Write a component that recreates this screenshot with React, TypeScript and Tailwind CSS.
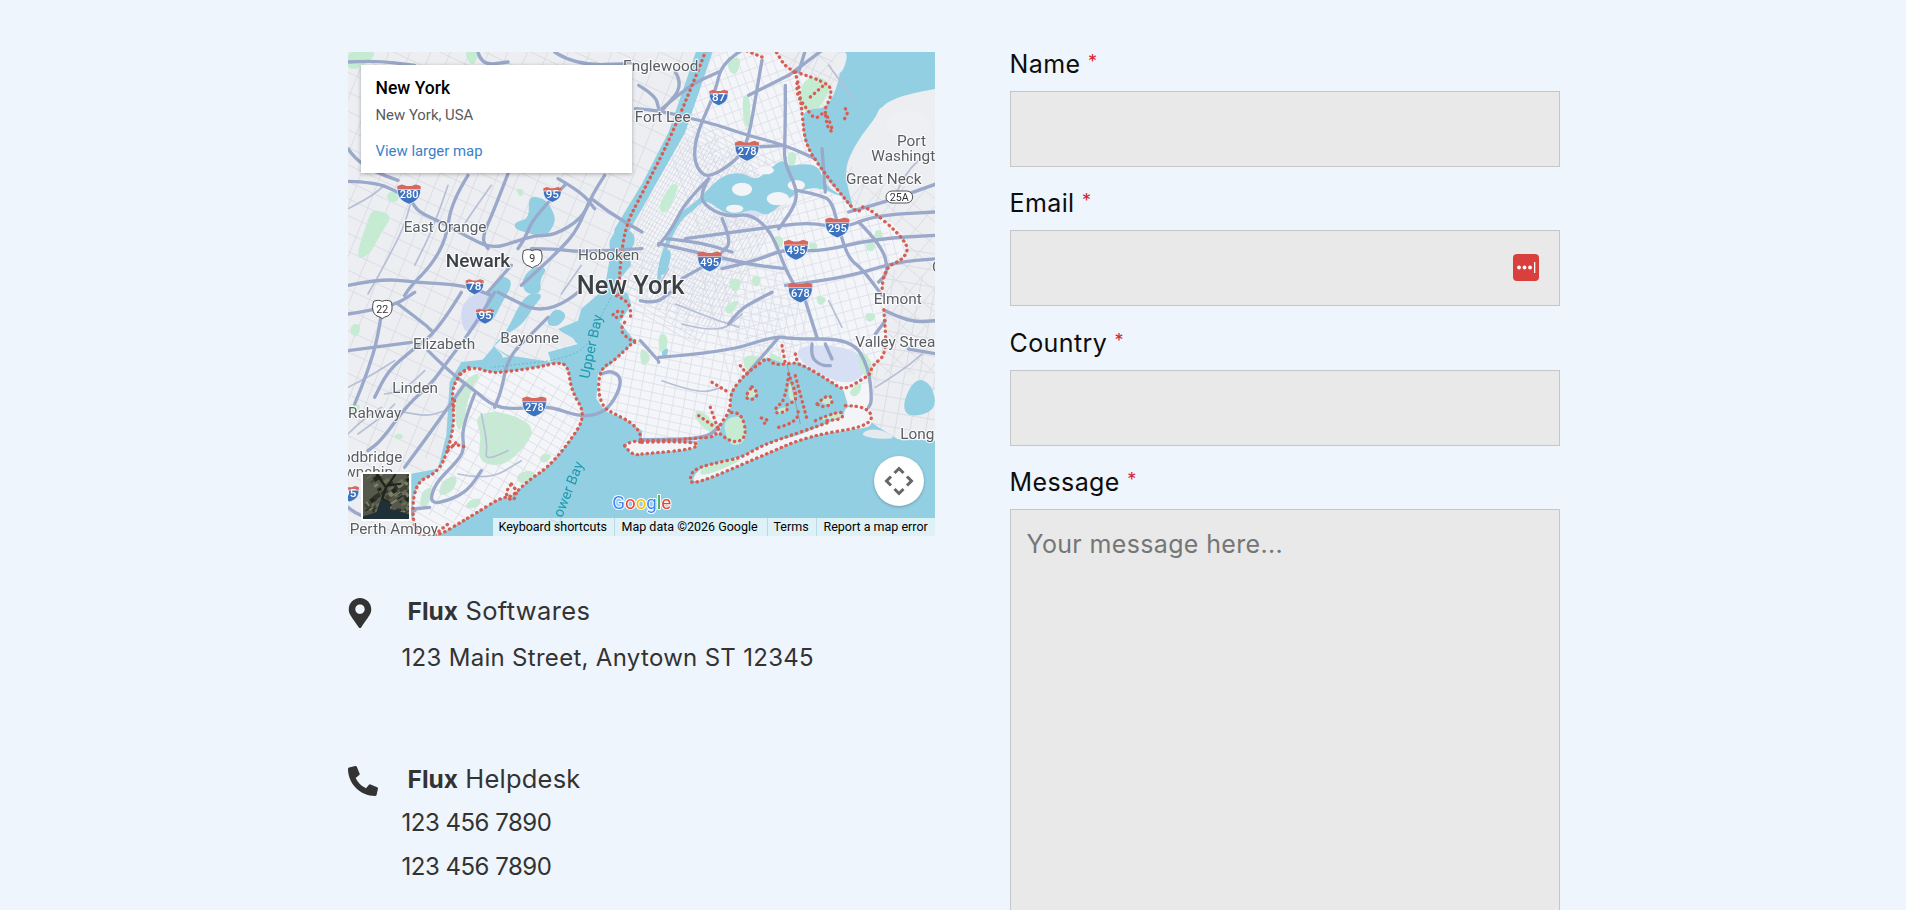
import { FaMapMarkerAlt, FaPhoneAlt } from "react-icons/fa";

type Off = [number, number];
const A: Off = [0, 0];
const B: Off = [882, 0];
const C: Off = [0, 726];
const D: Off = [882, 726];

const pts = (o: Off, s: string) =>
  s.trim().split(/\s+/).map((p) => {
    const [x, y] = p.split(",").map(Number);
    return [x + o[0], y + o[1]] as [number, number];
  });

// smooth line through points (midpoint quadratics)
const sm = (o: Off, s: string) => {
  const a = pts(o, s);
  if (a.length < 3) return `M${a[0]} L${a[1]}`;
  let d = `M${a[0][0]} ${a[0][1]}`;
  for (let i = 1; i < a.length - 1; i++) {
    const mx = (a[i][0] + a[i + 1][0]) / 2;
    const my = (a[i][1] + a[i + 1][1]) / 2;
    d += ` Q${a[i][0]} ${a[i][1]} ${mx} ${my}`;
  }
  const l = a[a.length - 1];
  return d + ` L${l[0]} ${l[1]}`;
};

const poly = (o: Off, s: string) => {
  const a = pts(o, s);
  let d = "";
  const n = a.length;
  for (let i = 0; i < n; i++) {
    const p = a[i];
    const q = a[(i + 1) % n];
    const mx = (p[0] + q[0]) / 2;
    const my = (p[1] + q[1]) / 2;
    d += i === 0 ? `M${mx} ${my}` : ` Q${p[0]} ${p[1]} ${mx} ${my}`;
  }
  const p = a[0];
  const q = a[1];
  return d + ` Q${p[0]} ${p[1]} ${(p[0] + q[0]) / 2} ${(p[1] + q[1]) / 2}Z`;
};

// street grid, wobbling slightly so it does not look ruled
const grid = (cx: number, cy: number, r: number, deg: number, step: number, seed = 1) => {
  const t = (deg * Math.PI) / 180;
  const ux = Math.cos(t), uy = Math.sin(t);
  const vx = -uy, vy = ux;
  let d = "";
  for (let k = -r, i = 0; k <= r; k += step, i++) {
    const j = Math.sin(i * 12.9 + seed) * step * 0.35;
    const s = -r + Math.abs(Math.sin(i * 7.3 + seed)) * r * 0.25;
    const e = r - Math.abs(Math.sin(i * 3.7 + seed)) * r * 0.25;
    d += `M${(cx + vx * (k + j) + ux * s).toFixed(0)} ${(cy + vy * (k + j) + uy * s).toFixed(0)}L${(cx + vx * (k + j) + ux * e).toFixed(0)} ${(cy + vy * (k + j) + uy * e).toFixed(0)}`;
  }
  return d;
};

const NYC =
  "1130,0 1192,0 1242,15 1282,0 1312,45 1342,55 1442,90 1372,170 1362,250 1402,320 1482,420 1522,490 1532,450 1672,540 1682,600 1602,650 1609,760 1617,906 1572,936 1567,966 1577,1130 1047,1300 745,1110 745,1000 830,726 850,640 882,470 1012,240 1097,0";
const SI =
  "335,966 370,941 430,964 500,956 570,946 630,931 660,941 670,1016 715,1091 660,1176 600,1246 540,1286 490,1336 460,1336 380,1386 330,1416 270,1452 195,1452 195,1296 270,1261 300,1196 320,1106 310,1016";
const OCEAN =
  "265,1460 1770,1460 1770,1166 1650,1162 1590,1125 1500,1060 1487,1016 1452,991 1352,931 1312,936 1257,916 1192,966 1147,1021 1147,1076 1122,1116 1112,1146 1047,1166 882,1166 882,1136 830,1101 770,1076 745,1040 750,966 790,936 860,866 815,810 850,760 840,726 800,700 850,640 830,560 882,470 1012,240 1097,-10 1047,-10 962,240 882,395 800,530 785,620 770,710 700,770 690,806 630,831 690,876 600,901 610,930 480,910 430,880 480,915 340,930 305,990 295,1150 270,1250 190,1265 190,1400";
const SOUND =
  "1482,-80 2000,-80 2000,90 1602,150 1582,200 1532,260 1492,340 1497,400 1522,490 1482,430 1432,380 1402,320 1372,280 1362,210 1372,170 1442,170 1482,60";
const EAST =
  "1072,420 1122,370 1182,360 1222,385 1257,360 1302,320 1322,345 1357,335 1412,340 1432,400 1472,425 1482,435 1412,405 1352,415 1272,480 1252,490 1212,470 1162,490 1122,480 1072,440 1032,480 1002,500 958,580 938,690 926,700 930,640 952,570 985,490 1030,460";
const ROCKAWAY =
  "1027,1304 1047,1251 1112,1231 1182,1216 1232,1186 1282,1166 1352,1151 1442,1111 1487,1096 1492,1061 1562,1061 1577,1121 1532,1131 1382,1151 1232,1216";
const CONEY = "830,1181 845,1166 882,1171 1047,1171 1047,1191 882,1206 850,1208";

const waters: [Off, string][] = [
  [A, "540,430 590,440 612,470 625,510 590,560 560,548 500,532 500,510 545,500"],
  [A, "530,726 520,680 560,640 600,650 575,680 580,726"],
  [A, "780,560 830,520 870,560 830,620 790,610"],
  [C, "530,-2 590,-2 555,40 525,90 470,125 425,170 385,222 430,236 475,190 430,155 470,125"],
  [C, "445,-60 500,-40 460,30 430,90 400,60"],
  [C, "620,40 660,60 630,100 590,90"],
  [D, "820,250 870,270 885,350 800,372 780,330"],
  [B, "60,600 90,590 80,650 55,680"],
  [D, "60,170 80,160 75,190 60,190"],
];
const parks: [Off, string][] = [
  [A, "20,625 60,500 75,470 135,490 100,540 65,610"],
  [A, "-5,-5 95,-5 45,45 -5,55"],
  [A, "350,-5 395,-5 380,40 360,30"],
  [A, "115,420 155,420 150,450 120,450"],
  [A, "500,410 530,410 520,440"],
  [B, "255,20 300,15 285,70 260,60"],
  [B, "300,130 325,130 325,230 305,220"],
  [B, "480,85 530,70 570,100 545,150 510,190 470,165"],
  [B, "435,300 465,300 460,340 440,350"],
  [B, "45,470 85,395 115,395 75,490"],
  [B, "650,320 690,310 690,345 655,355"],
  [B, "395,550 425,555 420,590 400,585"],
  [B, "500,570 530,575 520,595 500,590"],
  [B, "670,570 695,560 700,595 675,600"],
  [B, "830,190 875,195 860,225 830,225"],
  [B, "700,530 725,540 715,570 695,565"],
  [B, "260,680 300,680 290,720 265,715"],
  [B, "330,670 360,675 350,705 330,700"],
  [C, "325,285 375,240 400,240 365,290 340,420 320,390"],
  [C, "380,370 430,350 500,365 555,395 545,440 480,510 420,515 390,490 400,420"],
  [C, "280,560 330,540 320,590 270,610"],
  [C, "500,545 545,525 570,545 520,575"],
  [C, "360,620 400,610 395,640 350,645"],
  [C, "220,590 260,575 240,640 215,640"],
  [C, "590,475 615,485 590,510 570,495"],
  [C, "10,90 40,90 30,130 5,120"],
  [C, "140,420 165,420 165,435 140,435"],
  [C, "0,330 40,330 30,360 0,365"],
  [D, "-5,155 30,190 10,215 -5,210"],
  [D, "50,115 80,125 70,185 50,170"],
  [D, "240,380 300,360 315,430 290,455 260,450"],
  [D, "150,345 200,360 225,415 185,395"],
  [D, "530,315 570,295 578,335 530,338"],
  [D, "640,170 680,180 700,250 665,250"],
  [D, "240,40 300,10 265,70"],
  [D, "670,55 705,60 690,85 670,80"],
  [D, "300,180 375,190 345,215 310,235"],
  [D, "380,170 430,200 420,210 385,210"],
  [D, "170,500 240,505 220,530 170,540"],
  [D, "800,310 850,290 860,330 810,345"],
  [D, "620,290 660,260 655,300 630,310"],
];
const roads: [Off, string][] = [
  [A, "0,290 20,320 80,360 150,385"],
  [A, "0,388 80,390 150,420 190,445 210,480 280,510 350,550 430,590 500,570 560,550 620,550 700,500 730,440"],
  [A, "730,440 780,480 882,540"],
  [A, "630,380 700,420 740,470"],
  [A, "770,370 730,430 690,530 640,590 520,700"],
  [A, "650,400 560,490 530,560 510,590"],
  [A, "550,590 620,590 690,600 882,590"],
  [A, "480,365 440,470 400,560 420,590"],
  [A, "360,370 310,450 295,560 250,640 190,700 170,730"],
  [A, "0,700 100,680 200,690 350,700 430,730"],
  [A, "490,640 420,720"],
  [A, "0,30 80,25 200,40"],
  [A, "390,0 400,40 480,30"],
  [A, "620,0 680,40 860,35"],
  [C, "440,-5 370,110 300,200 250,270 180,330 100,440 60,470"],
  [C, "0,170 190,145"],
  [C, "240,170 300,230 380,290 440,340 520,345 600,335 700,370 770,355 810,300 820,250 790,230 760,240"],
  [C, "340,-5 270,110 190,170 120,230 80,310"],
  [C, "0,60 130,40 200,-5"],
  [C, "150,30 230,90 250,110"],
  [C, "100,60 90,130 60,230 20,330"],
  [C, "690,-5 600,70 450,-5"],
  [C, "600,70 550,120 480,190 460,290 440,340"],
  [C, "380,300 340,400 350,470 320,510 260,570 245,630 300,620 360,590 400,530"],
  [C, "245,640 195,645"],
  [C, "170,520 230,440 350,270"],
  [C, "0,640 60,690 200,650"],
  [B, "-20,170 50,175 150,200 230,220 300,245 430,280 520,320"],
  [B, "300,-5 240,30 220,120 170,230 155,300 165,350 200,380 290,320 320,260 345,110 360,25"],
  [B, "60,170 140,100 230,60"],
  [B, "-10,100 40,130 50,170"],
  [B, "100,60 125,100 65,170"],
  [B, "200,380 170,430 200,470 260,495 320,485 370,520 400,570 430,650 460,705"],
  [B, "200,380 130,450 90,530 50,580"],
  [B, "430,100 430,250 425,330 465,410 460,460 410,530"],
  [B, "465,415 540,430 570,450 590,530 620,620 660,650 720,730"],
  [B, "440,70 540,-5"],
  [B, "490,-5 470,60"],
  [B, "320,130 380,100 440,70"],
  [B, "540,290 550,420"],
  [B, "50,575 160,600 250,620 340,640 430,650"],
  [B, "240,500 270,570 240,600"],
  [B, "130,560 350,530 500,510 600,530 700,490 880,480"],
  [B, "70,560 170,570 270,600"],
  [B, "240,650 330,630 430,590 530,600 700,560 880,550"],
  [B, "120,680 190,640"],
  [B, "430,700 600,680 760,630 885,620"],
  [B, "650,510 720,580 740,660 710,690"],
  [B, "620,480 730,450 885,395"],
  [B, "340,285 430,280"],
  [D, "490,20 525,130"],
  [D, "-5,140 50,200 50,205"],
  [D, "50,190 250,175 400,125 450,135 630,135 680,220 690,320 680,340"],
  [D, "260,90 290,50 340,20 390,-5"],
  [D, "-5,20 40,30 85,-5"],
  [D, "315,240 410,130"],
  [D, "510,150 505,190 540,215 565,215"],
  [D, "550,150 570,195"],
  [D, "700,120 730,80"],
  [D, "730,50 800,85 885,80"],
  [D, "800,165 885,180"],
  [D, "-5,437 100,437 200,430 235,392"],
];
const minor: [Off, string][] = [
  [A, "200,400 180,500 120,620 60,726"],
  [A, "300,400 260,520 200,640"],
  [A, "0,470 60,440 110,400"],
  [A, "430,400 380,470 340,530"],
  [A, "700,640 640,726"],
  [C, "0,280 60,250 140,200"],
  [C, "30,420 100,370 140,330"],
  [C, "0,420 40,380 100,340"],
  [C, "150,350 230,370 290,350"],
  [C, "230,230 170,290 110,300"],
  [C, "400,360 420,450 410,500 480,470"],
  [C, "330,540 420,560 520,500"],
  [B, "640,150 560,40"],
  [B, "760,430 790,360 860,300"],
  [B, "80,650 40,720"],
  [D, "560,20 600,100"],
  [D, "100,30 200,70 290,100"],
  [D, "120,90 230,120 300,60"],
  [D, "60,260 170,300 240,280"],
  [D, "700,280 780,230 840,180"],
];
const marshes: [Off, string][] = [
  [D, "318,285 345,282 345,305 315,315"],
  [D, "405,345 435,338 432,358 405,360"],
  [D, "530,328 565,300 574,332"],
  [D, "442,250 470,320 438,322"],
  [D, "525,378 600,350 600,372 550,378"],
  [D, "150,350 235,395 215,425 170,390"],
  [D, "520,0 560,15 530,40"],
];
const dots: [Off, string][] = [
  [B, "192,-5 100,230 0,425 -51,523 -68,663 -68,733"],
  [C, "805,5 840,20 850,60 845,75"],
  [C, "795,62 815,45 830,60 810,75 795,62"],
  [C, "830,85 815,105 835,130 860,145"],
  [C, "860,140 800,200 770,215 755,240 750,290 765,340 800,360 850,385 880,420 875,450"],
  [C, "830,455 850,440 882,445"],
  [C, "830,455 850,482 882,482"],
  [D, "0,445 165,440 165,465 0,480"],
  [D, "0,440 110,438 165,432 220,430 235,390 265,350 265,295 310,240 345,215 375,190 395,212 430,210 470,205 570,265 605,290 670,250 685,240 690,215 735,180 725,40"],
  [B, "720,726 720,650 790,620 800,570 660,450 650,490 600,430 545,360 490,280 480,180 465,60 430,45 400,-5"],
  [B, "360,15 310,-5"],
  [B, "460,60 560,90 570,130 545,175 560,200 575,245 555,225 550,175 520,205 490,165 465,130 465,90"],
  [B, "505,135 545,100"],
  [B, "610,170 620,180 605,205"],
  [D, "330,278 352,298 330,320 308,310 330,278"],
  [D, "358,372 382,378 368,390 355,380"],
  [D, "440,240 430,320 400,340 400,360 440,350 430,330 470,320 440,240"],
  [D, "460,245 480,320 495,375"],
  [D, "410,400 465,385 470,340"],
  [D, "525,330 560,295 575,330 540,340 525,330"],
  [D, "520,380 600,345 605,375 550,380"],
  [D, "610,335 680,335 695,395 500,425 350,490 145,578 145,540 170,520 230,505 300,490 350,460 400,440 560,385"],
  [D, "210,265 260,295"],
  [D, "295,215 315,240"],
  [D, "420,155 430,210"],
  [D, "460,180 465,200"],
  [D, "205,340 230,410"],
  [D, "170,365 220,400"],
  [D, "235,420 270,450 315,430 300,360 265,355"],
  [C, "490,570 510,590 495,625 470,600 490,570"],
  [C, "320,320 315,350"],
  [C, "300,460 320,450 355,460"],
  [C, "300,470 330,440"],
  [C, "260,722 300,690"],
];

function Shield({ x, y, w, n }: { x: number; y: number; w: number; n: string }) {
  const hw = w / 2;
  const h = w * 0.85;
  return (
    <g transform={`translate(${x} ${y})`}>
      <path
        d={`M${-hw} ${-0.42 * h}L${-hw * 0.6} ${-0.5 * h}L${-hw * 0.2} ${-0.42 * h}L${hw * 0.2} ${-0.42 * h}L${hw * 0.6} ${-0.5 * h}L${hw} ${-0.42 * h}L${hw} ${-0.2 * h}L${-hw} ${-0.2 * h}Z`}
        fill="#d6695f"
      />
      <path
        d={`M${-hw} ${-0.24 * h}L${hw} ${-0.24 * h}C${hw} ${0.2 * h} ${0.6 * hw} ${0.36 * h} 0 ${0.5 * h}C${-0.6 * hw} ${0.36 * h} ${-hw} ${0.2 * h} ${-hw} ${-0.24 * h}Z`}
        fill="#3d72bf"
        stroke="#fff"
        strokeWidth="2"
      />
      <text x="0" y={w * 0.16} textAnchor="middle" fill="#fff" fontSize={n.length > 2 ? 33 : 35} fontWeight="500" fontFamily="Roboto, sans-serif">
        {n}
      </text>
    </g>
  );
}

function UsShield({ x, y, n }: { x: number; y: number; n: string }) {
  return (
    <g transform={`translate(${x} ${y})`}>
      <path
        d="M-26 -24C-16 -28 -8 -28 0 -24C8 -28 16 -28 26 -24C32 -6 30 12 16 20C10 22 4 24 0 28C-4 24 -10 22 -16 20C-30 12 -32 -6 -26 -24Z"
        fill="#fff"
        stroke="#4a4a4a"
        strokeWidth="3"
      />
      <text x="0" y="11" textAnchor="middle" fill="#333" fontSize="32" fontFamily="Roboto, sans-serif">
        {n}
      </text>
    </g>
  );
}

function Label({ x, y, t, size = 46, fill = "#5a5d61", weight = 400, anchor = "start" }: { x: number; y: number; t: string; size?: number; fill?: string; weight?: number; anchor?: "start" | "end" }) {
  return (
    <text x={x} y={y} fontSize={size} fill={fill} fontWeight={weight} textAnchor={anchor} stroke="#fff" strokeWidth="7" strokeOpacity="0.75" strokeLinejoin="round" paintOrder="stroke" fontFamily="Roboto, sans-serif">
      {t}
    </text>
  );
}

function MapDrawing() {
  return (
    <svg viewBox="0 0 1761 1452" className="w-[587px] h-[484px] block blur-[0.5px]">
      <defs>
        <clipPath id="nyc"><path d={poly([0, 0], NYC)} /></clipPath>
        <clipPath id="si"><path d={poly([0, 0], SI)} /></clipPath>
      </defs>
      <rect width="1761" height="1452" fill="#eceef2" />
      <g stroke="#d8dae1" strokeWidth="2.5" fill="none">
        <path d={grid(500, 400, 1100, 25, 52, 1)} />
        <path d={grid(500, 400, 1100, 112, 60, 2)} />
        <path d={grid(1600, 400, 500, 40, 48, 3)} />
        <path d={grid(1600, 400, 500, 130, 48, 4)} />
        <path d={grid(1600, 1000, 400, 10, 46, 5)} />
        <path d={grid(1600, 1000, 400, 100, 46, 6)} />
      </g>
      <path d={poly([0, 0], NYC)} fill="#f4f5f9" />
      <g clipPath="url(#nyc)" stroke="#dcdfe8" strokeWidth="2.5" fill="none">
        <path d={grid(1000, 950, 350, 12, 24, 1)} />
        <path d={grid(1000, 950, 350, 100, 30, 2)} />
        <path d={grid(1400, 700, 330, -15, 30, 3)} />
        <path d={grid(1400, 700, 330, 75, 26, 4)} />
        <path d={grid(1250, 200, 300, 70, 26, 5)} />
        <path d={grid(1250, 200, 300, -20, 34, 6)} />
        <path d={grid(950, 480, 300, -60, 10, 7)} stroke="#d5d8e1" />
        <path d={grid(950, 480, 300, 30, 16, 8)} stroke="#d8dbe3" />
      </g>
      <path d={poly(D, "465,150 640,160 685,230 610,280 470,205")} fill="#d7dff5" />
      <path d={poly(B, "290,470 330,445 370,490 330,495")} fill="#d7dff5" />
      <path d={poly(C, "340,30 390,-8 445,-12 395,95 355,120 340,85")} fill="#d2daf2" />
      <path d={poly(B, "400,440 440,430 430,470 400,470")} fill="#e6e8ee" />
      <g fill="#c5ecd3">
        {parks.map(([o, s], i) => (
          <path key={i} d={poly(o, s)} />
        ))}
      </g>
      <g fill="#92cfe3">
        <path d={"M" + OCEAN.replace(/\s+/g, " L") + "Z"} />
        <path d={poly([0, 0], SOUND)} />
        <path d={poly([0, 0], EAST)} />
        {waters.map(([o, s], i) => (
          <path key={i} d={poly(o, s)} />
        ))}
      </g>
      {/* land sitting on the water */}
      <g fill="#f3f4f8">
        <path d={poly([0, 0], ROCKAWAY)} />
        <path d={poly([0, 0], CONEY)} />
        <ellipse cx="1182" cy="412" rx="30" ry="20" />
        <ellipse cx="1290" cy="440" rx="34" ry="20" />
        <ellipse cx="1345" cy="400" rx="26" ry="16" />
        <ellipse cx="1160" cy="470" rx="26" ry="12" />
        <ellipse cx="1252" cy="355" rx="26" ry="12" />
      </g>
      <g fill="#c5ecd3">
        <path d={poly(D, "170,525 230,505 300,490 290,505 180,550")} />
        <path d={poly(D, "240,380 300,360 315,430 290,455 260,450")} />
        {marshes.map(([o, s], i) => (
          <path key={i} d={poly(o, s)} />
        ))}
      </g>
      <g fill="#eceef2">
        <path d={poly(B, "700,200 740,135 1000,90 1000,430 750,395 660,400 620,340 650,260")} />
        <path d={poly(D, "650,420 700,400 770,432 700,436")} fill="#e4eaee" />
        <path d={poly(C, "600,160 700,150 640,110 600,110")} fill="#e8eaee" />
        <path d={poly(B, "590,0 620,0 600,70 560,60")} />
      </g>
      <path d={poly(B, "730,200 790,170 850,190 880,230 800,260 740,250")} fill="#f0f1f4" opacity="0.6" />
      <path d={poly([0, 0], SI)} fill="#f4f5f8" />
      <g clipPath="url(#si)">
        <g fill="#c5ecd3">
          {parks.filter(([o]) => o === C).map(([o, s], i) => (
            <path key={i} d={poly(o, s)} />
          ))}
        </g>
        <g stroke="#d8dbe4" strokeWidth="2.5" fill="none">
          <path d={grid(450, 1200, 320, 30, 28, 1)} />
          <path d={grid(450, 1200, 320, 120, 34, 2)} />
        </g>
      </g>
      <g stroke="#b6bfd6" strokeWidth="5" fill="none" strokeLinecap="round" strokeLinejoin="round">
        {minor.map(([o, s], i) => (
          <path key={i} d={sm(o, s)} />
        ))}
      </g>
      <g stroke="#9aa8ca" strokeWidth="10" fill="none" strokeLinecap="round" strokeLinejoin="round">
        {roads.map(([o, s], i) => (
          <path key={i} d={sm(o, s)} />
        ))}
      </g>
      <path d={sm(C, "795,0 745,90 700,190 430,220")} stroke="#4fa9b8" strokeWidth="2" strokeDasharray="6 6" fill="none" />
      <path d={sm(D, "435,210 475,390")} stroke="#8f9eb5" strokeWidth="3" fill="none" />
      <g stroke="#d65f55" strokeWidth="10" strokeDasharray="1 15" strokeLinecap="round" fill="none">
        {dots.map(([o, s], i) => (
          <path key={i} d={sm(o, s)} />
        ))}
        <path d={sm([0, 0], SI.split(" ").concat(SI.split(" ").slice(0, 2)).join(" "))} />
      </g>

      <Shield x={183} y={427} w={70} n="280" />
      <Shield x={613} y={428} w={54} n="95" />
      <Shield x={380} y={705} w={54} n="78" />
      <Shield x={411} y={793} w={54} n="95" />
      <Shield x={1197} y={297} w={72} n="278" />
      <Shield x={1112} y={137} w={56} n="87" />
      <Shield x={1085} y={629} w={72} n="495" />
      <Shield x={1344} y={594} w={72} n="495" />
      <Shield x={1468} y={527} w={72} n="295" />
      <Shield x={1357} y={722} w={72} n="678" />
      <Shield x={559} y={1064} w={72} n="278" />
      <Shield x={5} y={1326} w={56} n="95" />
      <UsShield x={553} y={620} n="9" />
      <UsShield x={103} y={772} n="22" />
      <rect x="1614" y="417" width="80" height="36" rx="18" fill="#fff" stroke="#555" strokeWidth="3" />
      <text x="1654" y="446" textAnchor="middle" fontSize="32" fill="#333" fontFamily="Roboto, sans-serif">25A</text>

      <Label x={825} y={58} t="Englewood" />
      <Label x={860} y={210} t="Fort Lee" />
      <Label x={1647} y={282} t="Port" />
      <Label x={1570} y={327} t="Washington" />
      <Label x={1494} y={395} t="Great Neck" />
      <Label x={167} y={541} t="East Orange" />
      <Label x={293} y={645} t="Newark" size={57} fill="#3c4043" weight={500} />
      <Label x={690} y={625} t="Hoboken" />
      <Label x={686} y={725} t="New York" size={76} fill="#3c4043" weight={500} />
      <Label x={1577} y={756} t="Elmont" />
      <Label x={1522} y={886} t="Valley Stream" />
      <Label x={1752} y={660} t="C" />
      <Label x={457} y={874} t="Bayonne" />
      <Label x={195} y={891} t="Elizabeth" />
      <Label x={133} y={1023} t="Linden" />
      <Label x={0} y={1097} t="Rahway" />
      <Label x={163} y={1229} t="Woodbridge" anchor="end" />
      <Label x={135} y={1275} t="Township" anchor="end" />
      <Label x={5} y={1446} t="Perth Amboy" />
      <Label x={1657} y={1161} t="Long" />
      <text transform="translate(723 982) rotate(-78)" fontSize="43" fill="#1d9aad" fontFamily="Roboto, sans-serif">Upper Bay</text>
      <text transform="translate(633 1420) rotate(-68)" fontSize="43" fill="#1d9aad" fontFamily="Roboto, sans-serif">Lower Bay</text>
      <text x="793" y="1372" fontSize="56" fontFamily="Roboto, sans-serif" stroke="#fff" strokeWidth="6" strokeLinejoin="round" paintOrder="stroke">
        <tspan fill="#4285f4">G</tspan>
        <tspan fill="#ea4335">o</tspan>
        <tspan fill="#fbbc05">o</tspan>
        <tspan fill="#4285f4">g</tspan>
        <tspan fill="#34a853">l</tspan>
        <tspan fill="#ea4335">e</tspan>
      </text>
    </svg>
  );
}

const sat = Array.from({ length: 90 }, (_, i) => ({
  x: Math.abs(Math.sin(i * 91.7)) * 48,
  y: Math.abs(Math.sin(i * 37.3)) * 40,
  w: 2 + Math.abs(Math.sin(i * 13.1)) * 6,
  h: 1 + Math.abs(Math.sin(i * 5.9)) * 4,
  c: ["#2f3428", "#6b6d58", "#3f4534", "#7f8069", "#23281f"][i % 5],
}));

function SatelliteThumb() {
  return (
    <svg viewBox="0 0 48 47" className="w-full h-full block blur-[0.4px]">
      <rect width="48" height="47" fill="#55584a" />
      {sat.map((r, i) => (
        <rect key={i} x={r.x} y={r.y} width={r.w} height={r.h} fill={r.c} transform={`rotate(-35 ${r.x} ${r.y})`} />
      ))}
      <path d="M14 0L24 14L20 26L28 30" stroke="#20251d" strokeWidth="2.5" fill="none" />
      <path d="M34 0L26 12L40 10" stroke="#1c2119" strokeWidth="2" fill="none" />
      <path d="M18 28C26 26 30 32 28 37L36 38L48 42V47H0V44L14 40Z" fill="#1f3038" />
    </svg>
  );
}

function MapEmbed() {
  return (
    <div className="relative w-[587px] h-[484px] overflow-hidden font-['Roboto',sans-serif]">
      <MapDrawing />
      <div className="absolute left-[13px] top-[13px] w-[271px] h-[108px] bg-white shadow-[0_1px_4px_rgba(0,0,0,0.3)] pl-[15px] pt-[11px]">
        <div className="text-[17.5px] leading-[24px] font-medium text-black">New York</div>
        <div className="text-[14.9px] leading-[20px] mt-[5px] text-[#5b5b5b]">New York, USA</div>
        <div className="text-[14.9px] leading-[20px] mt-[16px] text-[#3b7fc9]">View larger map</div>
      </div>
      <div className="absolute left-[13px] top-[420px] w-[50px] h-[49px] border-2 border-white rounded-[2px] overflow-hidden bg-[#444]">
        <SatelliteThumb />
      </div>
      <div className="absolute left-[526px] top-[404px] w-[50px] h-[50px] rounded-full bg-white shadow-[0_1px_3px_rgba(0,0,0,0.25)] flex items-center justify-center">
        <svg viewBox="0 0 30 30" className="w-[30px] h-[30px]" fill="none" stroke="#666" strokeWidth="3">
          <path d="M10.5 7L15 2.5L19.5 7" />
          <path d="M10.5 23L15 27.5L19.5 23" />
          <path d="M7 10.5L2.5 15L7 19.5" />
          <path d="M23 10.5L27.5 15L23 19.5" />
        </svg>
      </div>
      <div className="absolute right-0 bottom-0 h-[18px] flex text-[12.5px] leading-[18px] text-black bg-[rgba(255,255,255,0.7)] divide-x divide-[#bcd8e2] whitespace-nowrap">
        <span className="w-[122px] pl-[6px]">Keyboard shortcuts</span>
        <span className="w-[153px] pl-[7px]">Map data ©2026 Google</span>
        <span className="w-[49px] pl-[6px]">Terms</span>
        <span className="w-[118px] pl-[7px]">Report a map error</span>
      </div>
    </div>
  );
}

function Field({ label, multiline, lastpass }: { label: string; multiline?: boolean; lastpass?: boolean }) {
  return (
    <div className="flex flex-col">
      <label className="h-[39px] text-[25px] leading-[24px] tracking-[0.4px] text-[#0d0d0d]">
        {label} <span className="relative top-[-5px] text-[18px] text-[#d9232e]">*</span>
      </label>
      {multiline ? (
        <textarea
          placeholder="Your message here..."
          className="w-[550px] h-[420px] resize-none bg-[#e9e9e9] border-[1.5px] border-[#c4c6c8] px-[16px] py-[18px] text-[25px] leading-[32px] tracking-[0.35px] placeholder:text-[#767676] outline-none"
        />
      ) : (
        <div className="relative">
          <input className="block w-[550px] h-[76px] bg-[#e9e9e9] border-[1.5px] border-[#c4c6c8] outline-none" />
          {lastpass && (
            <div className="absolute left-[503px] top-[24px] w-[26px] h-[27px] rounded-[4px] bg-[#d93f3c] flex items-center justify-center">
              <svg viewBox="0 0 26 27" className="w-[26px] h-[27px]">
                <circle cx="6" cy="13.5" r="1.9" fill="#fff" />
                <circle cx="11.5" cy="13.5" r="1.9" fill="#fff" />
                <circle cx="17" cy="13.5" r="1.9" fill="#fff" />
                <rect x="21" y="8" width="1.3" height="11" fill="#fff" />
              </svg>
            </div>
          )}
        </div>
      )}
    </div>
  );
}

export default function App() {
  return (
    <div className="h-[910px] w-full overflow-hidden bg-[#eff5fc] font-['Inter',sans-serif]">
      <div className="flex justify-center gap-[75px] pt-[52px] pl-[1px]">
        <div className="w-[587px] shrink-0">
          <MapEmbed />
          <div className="mt-[53px] flex text-[24px] leading-[44px] text-[#333]">
            <FaMapMarkerAlt className="w-[24px] h-[30px] mt-[9px] shrink-0 text-[#333]" />
            <div className="ml-[30px]">
              <div className="pl-[6px] text-[25.5px] tracking-[0.35px]"><b className="font-bold text-[24.5px] tracking-normal">Flux</b> Softwares</div>
              <div className="mt-[3px] tracking-[0.3px]">123 Main Street, Anytown ST 12345</div>
            </div>
          </div>
          <div className="mt-[77px] flex text-[24px] leading-[44px] text-[#333]">
            <FaPhoneAlt className="w-[30px] h-[30px] mt-[9px] shrink-0 text-[#333]" />
            <div className="ml-[24px]">
              <div className="pl-[6px] text-[25.5px] tracking-[0.2px]"><b className="font-bold text-[24.5px] tracking-normal">Flux</b> Helpdesk</div>
              <div className="tracking-[-0.5px]">123 456 7890</div>
              <div className="tracking-[-0.5px]">123 456 7890</div>
            </div>
          </div>
        </div>
        <div className="w-[550px] shrink-0 flex flex-col gap-[24.3px]">
          <Field label="Name" />
          <Field label="Email" lastpass />
          <Field label="Country" />
          <Field label="Message" multiline />
        </div>
      </div>
    </div>
  );
}
